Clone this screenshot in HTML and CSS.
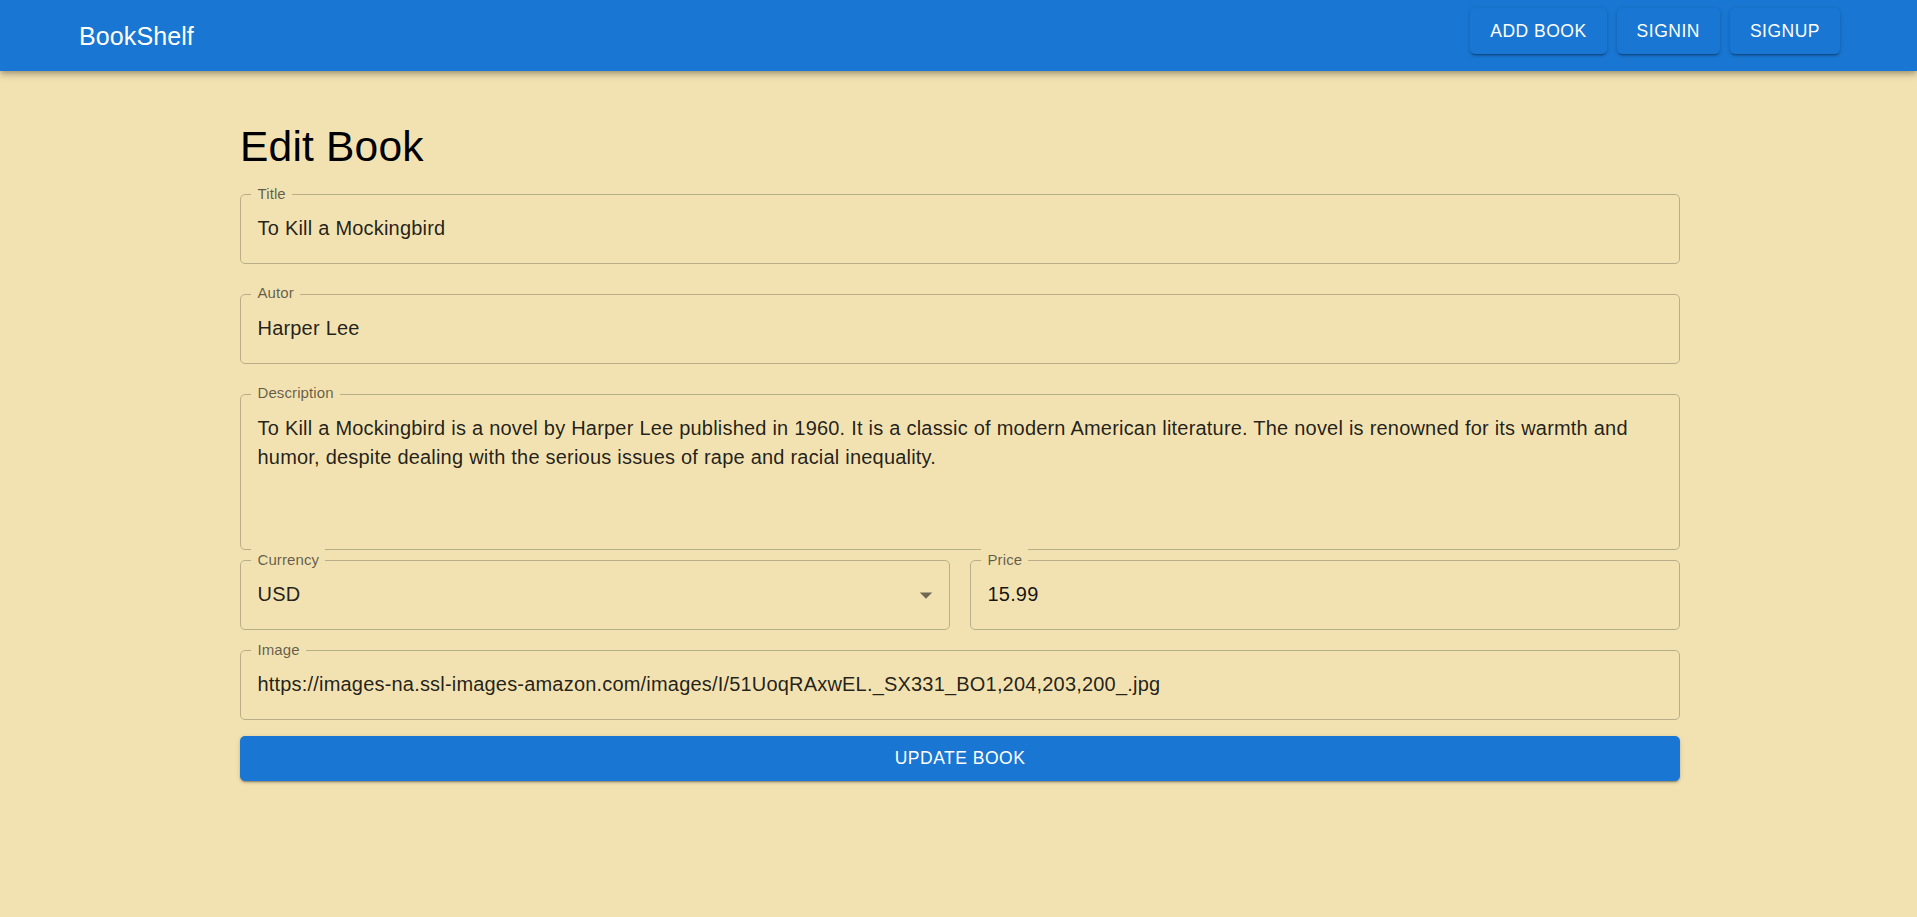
FILE: index.html
```html
<!DOCTYPE html>
<html lang="en">
<head>
<meta charset="utf-8">
<title>BookShelf</title>
<link rel="stylesheet" href="styles.css">
</head>
<body>
<header class="appbar">
  <div class="appbar__brand">BookShelf</div>
  <nav class="appbar__nav">
    <button class="btn btn--nav">ADD BOOK</button>
    <button class="btn btn--nav">SIGNIN</button>
    <button class="btn btn--nav">SIGNUP</button>
  </nav>
</header>
<main class="page">
  <h1 class="page__title">Edit Book</h1>
  <form class="form">
    <div class="field field--spaced">
      <span class="field__label">Title</span>
      <div class="field__value">To Kill a Mockingbird</div>
    </div>
    <div class="field field--spaced">
      <span class="field__label">Autor</span>
      <div class="field__value">Harper Lee</div>
    </div>
    <div class="field field--spaced">
      <span class="field__label">Description</span>
      <div class="field__value field__value--multi">To Kill a Mockingbird is a novel by Harper Lee published in 1960. It is a classic of modern American literature. The novel is renowned for its warmth and humor, despite dealing with the serious issues of rape and racial inequality.</div>
    </div>
    <div class="form__row">
      <div class="field field--select">
        <span class="field__label">Currency</span>
        <div class="field__value">USD</div>
        <svg class="field__arrow" viewBox="0 0 24 24" width="30" height="30" aria-hidden="true"><path d="M7 10l5 5 5-5z"/></svg>
      </div>
      <div class="field">
        <span class="field__label">Price</span>
        <div class="field__value field__value--num">15.99</div>
      </div>
    </div>
    <div class="field field--spaced">
      <span class="field__label">Image</span>
      <div class="field__value">https://images-na.ssl-images-amazon.com/images/I/51UoqRAxwEL._SX331_BO1,204,203,200_.jpg</div>
    </div>
    <button type="button" class="btn btn--submit">UPDATE BOOK</button>
  </form>
</main>
</body>
</html>
```
FILE: styles.css
```css
html {
  background: #f2e2b2;
}
body {
  margin: 0;
  min-height: 100vh;
  background: #f2e2b2;
  font-family: "Liberation Sans", Arial, sans-serif;
  color: rgba(0, 0, 0, 0.87);
}

.appbar {
  height: 71px;
  box-sizing: border-box;
  background: #1976d2;
  color: #fff;
  display: flex;
  align-items: center;
  justify-content: space-between;
  padding: 0 77px 0 79px;
  box-shadow: 0 2px 5px -1px rgba(0,0,0,0.2), 0 4px 6px 0 rgba(0,0,0,0.14), 0 1px 12px 0 rgba(0,0,0,0.12);
  position: relative;
  z-index: 1;
}
.appbar__brand {
  font-size: 25px;
  line-height: 40px;
  font-weight: 400;
  letter-spacing: 0.1px;
}
.appbar__nav {
  align-self: flex-start;
  margin-top: 8px;
  display: flex;
  gap: 10px;
}

.btn {
  font-family: "Liberation Sans", Arial, sans-serif;
  font-size: 17.5px;
  font-weight: 400;
  letter-spacing: 0.5px;
  line-height: 30.6px;
  color: #fff;
  background: #1976d2;
  border: 0;
  border-radius: 5px;
  padding: 7.5px 20px;
  cursor: pointer;
  box-shadow: 0 3px 1px -2px rgba(0,0,0,0.2), 0 2px 2px 0 rgba(0,0,0,0.14), 0 1px 5px 0 rgba(0,0,0,0.12);
}

.page {
  max-width: 1440px;
  margin: 0 auto;
  padding: 50.3px 0 0 3px;
}
.page__title {
  margin: 0;
  font-size: 42.5px;
  line-height: 52.5px;
  font-weight: 400;
  letter-spacing: 0.2px;
  color: #000;
}

.form {
  display: flex;
  flex-direction: column;
}
.form__row {
  display: flex;
  gap: 20px;
}
.form__row .field {
  flex: 1;
}

.field {
  position: relative;
  border: 1px solid #baae89;
  border-radius: 5px;
  box-sizing: border-box;
}
.field--spaced {
  margin: 20px 0 10px;
}
.field__label {
  position: absolute;
  top: -12.25px;
  left: 10.25px;
  padding: 0 6.25px;
  font-size: 15px;
  line-height: 21.5px;
  letter-spacing: 0.1px;
  color: rgba(0, 0, 0, 0.6);
  background: #f2e2b2;
}
.field__value {
  padding: 19.6px 16.5px;
  font-size: 20px;
  line-height: 28.75px;
  min-height: 28.75px;
  letter-spacing: 0.19px;
  word-spacing: 0.15px;
  white-space: nowrap;
}
.field__value--multi {
  white-space: normal;
  height: 115px;
}
.field__value--num {
  color: rgba(0, 0, 0, 0.92);
}
.field__arrow {
  position: absolute;
  right: 7.75px;
  top: 50%;
  transform: translateY(-50%);
  fill: rgba(0, 0, 0, 0.54);
}

.btn--submit {
  margin-top: 6px;
  width: 100%;
}
```
